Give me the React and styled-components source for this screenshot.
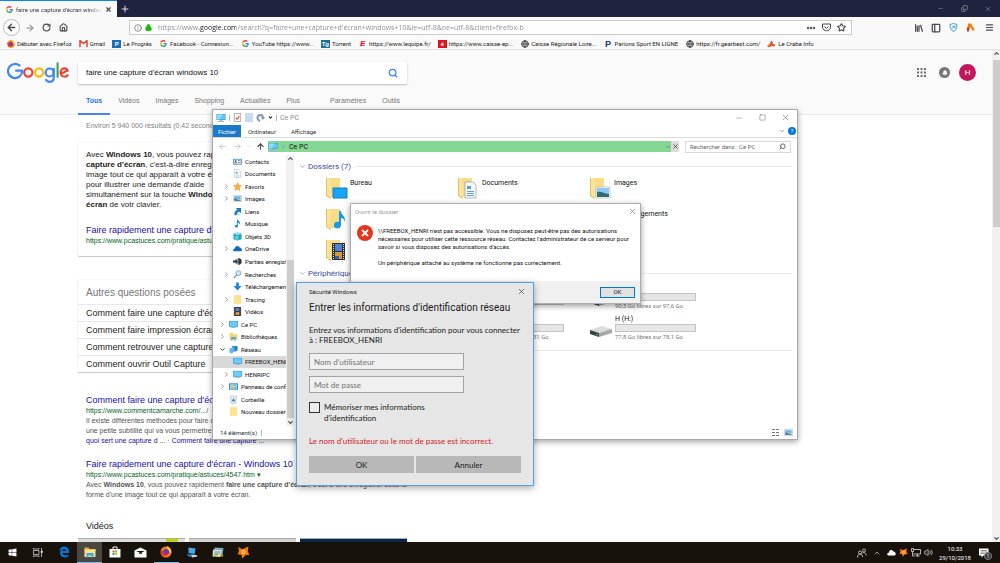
import React from 'react';
import styled, { createGlobalStyle, css } from 'styled-components';
import {
  ArrowLeft,
  ArrowRight,
  ArrowUp,
  Bell,
  ChevronDown,
  ChevronRight,
  ChevronUp,
  Copy,
  Ellipsis,
  Globe,
  House,
  Info,
  Library,
  Lock,
  Menu,
  Minus,
  PanelLeft,
  Plus,
  RotateCw,
  Search,
  Square,
  Star,
  Volume2,
  X,
} from 'lucide-react';
import { FaWindows } from 'react-icons/fa';

const arial = `'Liberation Sans', Arial, sans-serif`;
const ui = `Roboto, 'Noto Sans', sans-serif`;
const humanist = `Lato, 'Noto Sans', sans-serif`;

const GlobalStyle = createGlobalStyle`
  *, *::before, *::after { box-sizing: border-box; }
  body { margin: 0; overflow: hidden; background: #fff; font-family: ${ui}; }
  button, input { font: inherit; color: inherit; margin: 0; padding: 0; border: 0; background: none; border-radius: 0; }
  a { color: inherit; text-decoration: none; }
  h1, h2, h3, p, ul { margin: 0; padding: 0; font-weight: 400; list-style: none; }
  svg { display: block; flex: none; }
`;

// Desktop

const Desktop = styled.div`
  position: relative;
  display: flex;
  flex-direction: column;
  height: 100vh;
  overflow: hidden;
`;

const IconButton = styled.button`
  display: flex;
  align-items: center;
  justify-content: center;
  width: ${p => p.$w || 12}px;
  height: 12px;
  flex: none;
  color: ${p => p.$color || '#4a4a4f'};
`;

const Spacer = styled.div`
  flex: 1;
`;

// Browser chrome

const TabBar = styled.header`
  display: flex;
  height: 17px;
  flex: none;
  background: #202340;
`;

const Tab = styled.div`
  display: flex;
  align-items: center;
  gap: 3px;
  width: 117px;
  padding: 0 5px 0 6px;
  border-top: 1px solid #0a84ff;
  background: #f9f9fa;
  font-size: 6px;
  color: #38383d;
`;

const TabTitle = styled.span`
  flex: 1;
  overflow: hidden;
  white-space: nowrap;
  mask-image: linear-gradient(90deg, #000 85%, transparent);
`;

const TabBarButtons = styled.div`
  display: flex;
  align-items: center;
  gap: 12px;
  padding: 0 6px 0 2px;
`;

const NavBar = styled.nav`
  display: flex;
  align-items: center;
  gap: 5px;
  height: 21px;
  flex: none;
  padding: 0 3px;
  background: #f9f9fa;
`;

const BackButton = styled(IconButton)`
  width: 17px;
  height: 17px;
  border: 1px solid #b9b9bb;
  border-radius: 50%;
  background: #fdfdfd;
`;

const UrlBox = styled.div`
  display: flex;
  align-items: center;
  gap: 3px;
  flex: 1;
  height: 15px;
  margin: 0 56px 0 55px;
  padding: 0 4px;
  border: 1px solid #ccc;
  background: #fff;
  color: #5a5a5e;
`;

const UrlInput = styled.input`
  flex: 1;
  min-width: 0;
  margin-left: 3px;
  outline: none;
  font: 7px 'Open Sans', 'Noto Sans', sans-serif;
  color: transparent;
  background: linear-gradient(90deg, #8a8a8e 41px, #15141a 41px 78px, #8a8a8e 78px);
  background-clip: text;
`;

const Bookmarks = styled.ul`
  display: flex;
  align-items: center;
  gap: 7px;
  height: 12px;
  flex: none;
  padding: 0 6px;
  border-bottom: 1px solid #e1e1e2;
  background: #f9f9fa;
  font-size: 6px;
  color: #1c1c20;
  white-space: nowrap;
`;

const Bookmark = styled.a`
  display: flex;
  align-items: center;
  gap: 2px;
`;

const Favicon = styled.span`
  display: flex;
  align-items: center;
  justify-content: center;
  width: 9px;
  height: 8px;
  background: ${p => p.$bg || 'transparent'};
  color: ${p => p.$color || '#fff'};
  font: ${p => (p.$italic ? 'italic' : 'normal')} 700 ${p => p.$size || 6}px/8px ${arial};
`;

// Results page

const Page = styled.main`
  display: flex;
  flex: 1;
  min-height: 0;
  overflow: hidden;
  font-family: ${arial};
`;

const PageBody = styled.div`
  flex: 1;
  min-width: 0;
  overflow: hidden;
`;

const PageHeader = styled.div`
  height: 65px;
  padding-top: 11px;
  border-bottom: 1px solid #ebebeb;
  background: #fafafa;
`;

const SearchRow = styled.div`
  display: flex;
  align-items: center;
  height: 23px;
  padding: 0 16px 0 7px;
`;

const Logo = styled.a`
  width: 71px;
`;

const SearchBox = styled.form`
  display: flex;
  align-items: center;
  width: 329px;
  height: 22px;
  padding: 0 9px 0 8px;
  border-radius: 1px;
  background: #fff;
  box-shadow: 0 1px 2px rgba(0, 0, 0, 0.25);
`;

const SearchInput = styled.input`
  flex: 1;
  min-width: 0;
  outline: none;
  font-size: 8px;
  color: #111;
`;

const HeaderTools = styled.div`
  display: flex;
  align-items: center;
  gap: 13px;
`;

const BellBadge = styled.button`
  display: flex;
  align-items: center;
  justify-content: center;
  width: 11px;
  height: 11px;
  border-radius: 50%;
  background: #757575;
  color: #fff;
`;

const Avatar = styled.button`
  width: 17px;
  height: 17px;
  margin-left: -4px;
  border-radius: 50%;
  background: #c2185b;
  color: #fff;
  font: 8px ${ui};
`;

const SearchTabs = styled.nav`
  display: flex;
  height: 31px;
  padding-left: 78px;
`;

const SearchTab = styled.a`
  display: flex;
  align-items: flex-start;
  padding: 13px 8px 0;
  margin-right: ${p => (p.$gap ? 14 : 0)}px;
  font-size: 7px;
  line-height: 8px;
  color: #777;
  ${p =>
    p.$active &&
    css`
      font-weight: 700;
      color: #1a73e8;
      border-bottom: 2px solid #4285f4;
    `}
`;

const Results = styled.div`
  display: flex;
  flex-direction: column;
  width: 329px;
  margin-left: 78px;
`;

const Stats = styled.p`
  padding: 6px 8px 0;
  font-size: 7px;
  line-height: 10px;
  color: #808080;
`;

const Card = styled.section`
  margin-top: ${p => p.$top}px;
  border-radius: 1px;
  background: #fff;
  box-shadow: 0 0 1px rgba(0, 0, 0, 0.3), 0 1px 1px rgba(0, 0, 0, 0.2);
`;

const Snippet = styled(Card)`
  height: 114px;
  padding: 8px;
`;

const SnippetText = styled.p`
  margin-bottom: 14px;
  font-size: 8px;
  line-height: 10px;
  color: #222;
  white-space: nowrap;
`;

const ResultTitle = styled.a`
  display: block;
  font-size: 9px;
  line-height: 12px;
  color: #1a0dab;
  white-space: nowrap;
`;

const Cite = styled.span`
  display: block;
  font-size: 7px;
  line-height: 10px;
  color: #006621;
`;

const CardTitle = styled.h2`
  padding: 2px 8px 0;
  font-size: 10px;
  line-height: 22px;
  color: #777;
`;

const Question = styled.button`
  display: block;
  width: 100%;
  height: 17px;
  padding: 0 8px;
  border-top: 1px solid #e8e8e8;
  font-size: 9px;
  line-height: 16px;
  text-align: left;
  color: #222;
`;

const Result = styled.article`
  margin-top: ${p => p.$top}px;
  padding: 0 8px;
  font-size: 7px;
  line-height: 10px;
  color: #545454;
  white-space: nowrap;

  p a {
    color: #1a0dab;
  }
`;

const VideosTitle = styled.h2`
  padding: 20px 8px 6px;
  font-size: 9px;
  line-height: 12px;
  color: #222;
`;

const Videos = styled.div`
  display: flex;
  gap: 4px;
`;

const Thumb = styled.a`
  flex: 1;
  height: 20px;
  border-top: 1px solid #aaa;
  background: ${p => p.$bg};
`;

const ScrollBar = styled.div`
  display: flex;
  flex-direction: column;
  align-items: center;
  width: 8px;
  flex: none;
  background: #f0f0f0;
  color: #505050;
`;

const ScrollThumb = styled.div`
  width: 7px;
  height: ${p => p.$h}px;
  margin: ${p => p.$mt || 0}px 0 auto;
  background: #cdcdcd;
`;

// Windows floating over the desktop

const Window = styled.section`
  position: absolute;
  left: ${p => p.$x}px;
  top: ${p => p.$y}px;
  width: ${p => p.$w}px;
  display: flex;
  flex-direction: column;
`;

const ExplorerWindow = styled(Window)`
  height: 331px;
  border: 1px solid #a8a8a8;
  background: #fff;
  box-shadow: 0 2px 6px rgba(0, 0, 0, 0.35);
  font-size: 7px;
  color: #111;
`;

const TitleRow = styled.div`
  display: flex;
  align-items: center;
  gap: 3px;
  height: 15px;
  padding: 0 2px 0 3px;
  color: #8c8c8c;
`;

const Divider = styled.span`
  width: 1px;
  height: 6px;
  background: #b5b5b5;
`;

const Ribbon = styled.div`
  display: flex;
  align-items: center;
  height: 13px;
  padding-right: 1px;
  border-bottom: 1px solid #dadbdc;
`;

const RibbonTab = styled.button`
  height: 12px;
  padding: 0 ${p => (p.$active ? 5 : 7)}px;
  margin-right: ${p => (p.$active ? 0 : 1)}px;
  font-size: 6px;
  color: ${p => (p.$active ? '#fff' : '#333')};
  background: ${p => (p.$active ? '#1979ca' : 'transparent')};
`;

const HelpBadge = styled.button`
  width: 8px;
  height: 8px;
  border-radius: 50%;
  background: #0078d7;
  color: #fff;
  font-size: 6px;
  line-height: 8px;
`;

const AddressRow = styled.div`
  display: flex;
  align-items: center;
  height: 17px;
  padding: 0 6px 0 2px;
`;

const Address = styled.div`
  display: flex;
  align-items: center;
  gap: 3px;
  flex: 1;
  height: 11px;
  padding-left: 0;
  margin-left: 2px;
  background: #84d894;
`;

const StopButton = styled(IconButton)`
  width: 8px;
  height: 11px;
  background: #dcdcdc;
`;

const FindBox = styled.label`
  display: flex;
  align-items: center;
  width: 106px;
  height: 12px;
  margin-left: 6px;
  padding: 0 4px;
  border: 1px solid #d9d9d9;
  font-size: 6px;

  input {
    flex: 1;
    min-width: 0;
  }
  input::placeholder {
    color: #666;
    opacity: 1;
  }
`;

const FindIcon = styled(Search)`
  transform: scaleX(-1);
`;

const Panes = styled.div`
  display: flex;
  flex: 1;
  min-height: 0;
`;

const Tree = styled.ul`
  display: flex;
  flex-direction: column;
  width: 73px;
  height: 263px;
  font-size: 6px;
`;

const TreeItem = styled.li`
  display: flex;
  align-items: center;
  flex: 1;
  gap: 3px;
  padding-left: ${p => (p.$depth ? 10 : 6)}px;
  overflow: hidden;
  white-space: nowrap;
  background: ${p => (p.$selected ? '#d9d9d9' : 'transparent')};
`;

const Twisty = styled.span`
  width: 7px;
  flex: none;
  color: #888;
`;

const TreeScroll = styled(ScrollBar)`
  height: 271px;
`;

const Files = styled.div`
  flex: 1;
  padding: 6px 4px 0 5px;
`;

const GroupTitle = styled.h3`
  display: flex;
  align-items: center;
  gap: 2px;
  height: 10px;
  font-size: 8px;
  color: #3b4a9c;

  &::after {
    content: '';
    flex: 1;
    height: 1px;
    margin-left: 2px;
    background: #ececec;
  }
`;

const FolderGrid = styled.div`
  display: grid;
  grid-template-columns: repeat(3, 132px);
  grid-auto-rows: 31px;
  padding: 4px 0 0 27px;
`;

const FolderItem = styled.div`
  display: flex;
  gap: 2px;
  padding-top: 2px;

  span {
    padding-top: 2px;
  }
`;

const DriveGrid = styled.div`
  display: grid;
  grid-template-columns: repeat(3, 132px);
  grid-auto-rows: 31px;
  padding: 3px 0 7px 27px;
  border-bottom: 1px solid #ececec;
  color: #777;
`;

const DriveItem = styled.div`
  display: flex;
  align-items: center;
  gap: 3px;

  svg {
    margin-top: 6px;
  }
`;

const DriveInfo = styled.div`
  display: flex;
  flex-direction: column;
  width: 81px;
  font-size: 6px;
  line-height: 9px;
  white-space: nowrap;

  strong {
    font-size: 7px;
    font-weight: 400;
    color: #111;
  }
`;

const DriveBar = styled.div`
  height: 8px;
  border: 1px solid #c4c4c4;
  background: #e6e6e6;
`;

const StatusBar = styled.footer`
  display: flex;
  align-items: center;
  gap: 4px;
  height: 13px;
  padding: 0 4px 0 7px;
  font-size: 6px;
  color: #234;
`;

const ErrorWindow = styled(Window)`
  border: 1px solid #adadad;
  background: #fff;
  box-shadow: 0 2px 6px rgba(0, 0, 0, 0.4);
  font-size: 6px;
  line-height: 8px;
  color: #111;
`;

const ErrorTitle = styled.div`
  display: flex;
  align-items: center;
  justify-content: space-between;
  height: 15px;
  padding: 0 1px 0 4px;
  color: #999;
`;

const ErrorBody = styled.div`
  display: flex;
  gap: 5px;
  height: 62px;
  padding: 5px 6px 0;

  p {
    padding-top: 3px;
    white-space: nowrap;
  }
  p + p {
    padding-top: 8px;
  }
`;

const ErrorFooter = styled.div`
  display: flex;
  align-items: center;
  justify-content: flex-end;
  height: 22px;
  padding-right: 5px;
  background: #f0f0f0;
`;

const OkButton = styled.button`
  width: 35px;
  height: 11px;
  border: 1px solid #0078d7;
  background: #e1e1e1;
`;

const LoginWindow = styled(Window)`
  height: 204px;
  border: 1px solid #5ba0dc;
  background: #e6e6e6;
  box-shadow: 0 2px 7px rgba(0, 0, 0, 0.35);
  padding: 0 12px;
  font-family: ${humanist};
  font-size: 8px;
  color: #1a1a1a;
`;

const LoginTop = styled.div`
  display: flex;
  align-items: center;
  justify-content: space-between;
  height: 16px;
  margin-right: -6px;
  font: 6px ${ui};
`;

const LoginTitle = styled.h2`
  font: 10px/17px ${ui};
  white-space: nowrap;
`;

const LoginText = styled.p`
  margin: 9px 0 8px;
  line-height: 10px;
  white-space: nowrap;
`;

const LoginInput = styled.input`
  width: 155px;
  height: 17px;
  margin-bottom: 6px;
  padding: 0 4px;
  border: 1px solid #a3a3a3;
  background: #f0f0f0;

  &::placeholder {
    color: #707070;
    opacity: 1;
  }
`;

const Remember = styled.label`
  display: flex;
  gap: 4px;
  margin-top: 3px;
  line-height: 11px;

  input {
    appearance: none;
    width: 11px;
    height: 11px;
    border: 1px solid #333;
    background: #ececec;
  }
`;

const LoginError = styled.p`
  margin: 12px 0 9px;
  line-height: 11px;
  color: #d0201f;
  white-space: nowrap;
`;

const LoginActions = styled.div`
  display: flex;
  gap: 2px;

  button {
    flex: 1;
    height: 17px;
    background: #b8b8b8;
  }
`;

// Taskbar

const Taskbar = styled.footer`
  display: flex;
  align-items: stretch;
  height: 21px;
  flex: none;
  background: #17120c;
  color: #fff;
`;

const TaskApps = styled.div`
  display: grid;
  grid-template-columns: repeat(10, 1fr);
  width: 256px;
`;

const TaskButton = styled.button`
  display: flex;
  align-items: center;
  justify-content: center;
  border-bottom: 1px solid ${p => (p.$open ? '#76b9ed' : 'transparent')};
  background: ${p => (p.$active ? '#4a4641' : 'transparent')};
`;

const Tray = styled.div`
  display: flex;
  align-items: center;
  gap: 3px;
  margin-left: auto;
  padding-right: 11px;
`;

const Clock = styled.time`
  display: block;
  width: 34px;
  margin-left: 2px;
  font-size: 6px;
  line-height: 9px;
  text-align: center;
  white-space: nowrap;
`;

const NoticeBadge = styled.button`
  position: relative;
  display: flex;
  margin-left: 4px;

  span {
    position: absolute;
    left: 5px;
    top: 4px;
    width: 8px;
    height: 8px;
    border: 1px solid #888;
    border-radius: 50%;
    background: #333;
    font-size: 5px;
    line-height: 6px;
  }
`;

// Drawings

const GoogleG = () => (
  <svg width="7" height="7" viewBox="0 0 48 48">
    <path fill="#ea4335" d="M24 9.500c3.500 0 6.700 1.200 9.200 3.600l6.900-6.900C35.900 2.400 30.500 0 24 0 14.600 0 6.500 5.400 2.600 13.200l8 6.200C12.400 13.700 17.700 9.500 24 9.500z" />
    <path fill="#4285f4" d="M47 24.600c0-1.600-.2-3.100-.4-4.600H24v9h12.900c-.6 3-2.200 5.500-4.700 7.200l7.700 6C44.400 38 47 31.800 47 24.600z" />
    <path fill="#fbbc05" d="M10.500 28.600c-.5-1.500-.8-3-.8-4.600s.3-3.100.8-4.600l-8-6.200C1 16.500 0 20.100 0 24s.9 7.500 2.600 10.800z" />
    <path fill="#34a853" d="M24 48c6.500 0 11.900-2.100 15.900-5.800l-7.700-6c-2.200 1.500-4.900 2.300-8.200 2.300-6.300 0-11.600-4.200-13.500-9.900l-8 6.200C6.500 42.600 14.600 48 24 48z" />
  </svg>
);

const GoogleLogo = () => (
  <svg width="62" height="21" viewBox="0 0 272 92" role="img" aria-label="Google">
    <g fill="none" strokeWidth="9.500">
      <path stroke="#4285f4" d="M58 18A31 31 0 1 0 66.500 38H36" />
      <circle stroke="#ea4335" cx="93.500" cy="46" r="18" />
      <circle stroke="#fbbc05" cx="141" cy="46" r="18" />
      <circle stroke="#4285f4" cx="187" cy="46" r="17.500" />
      <path stroke="#4285f4" d="M205.500 26v40c0 14-7 21-18 21-9 0-15-5-17.500-12" />
      <path stroke="#34a853" d="M222 2v66" />
      <path stroke="#ea4335" d="M234 51l32-13c-3-7-8-10-14-10-9 0-17 7-17 18s8 18.500 18 18.500c7 0 12-3.500 15.500-9" />
    </g>
  </svg>
);

const Monitor = ({ size = 10 }) => (
  <svg width={size} height={size} viewBox="0 0 20 20">
    <path fill="#2a8dd4" d="M1 2h18v12H1z" />
    <path fill="#5cc7fb" d="M2 3h16v10H2z" />
    <path fill="#91dcff" d="M2 3h12L7 13H2z" />
    <path fill="#9fb4c4" d="M8 14h4v2H8zM4 16h12v2H4z" />
  </svg>
);

// Small icons of the navigation tree, on a 20 unit grid
const treeGlyphs = {
  contacts: (
    <>
      <path fill="#4f9fcf" d="M0 4h20v13H0z" />
      <path fill="#e8f4fb" d="M2 6h16v9H2z" />
      <circle cx="6" cy="9" r="2" fill="#345" />
      <path fill="#345" d="M3 14h6v-2H3zM11 8h6v1h-6zM11 11h6v1h-6z" />
    </>
  ),
  documents: (
    <>
      <path fill="#fff" stroke="#8ba3b5" d="M3 1h10l4 4v14H3z" />
      <path fill="#4a9bd0" d="M6 6h4v4H6zM6 12h8v1H6zM6 15h8v1H6zM11 7h3v1h-3z" />
    </>
  ),
  properties: (
    <>
      <path fill="#fff" stroke="#8c8c8c" strokeWidth="1.500" d="M3 1h14v18H3z" />
      <path fill="none" stroke="#e0552c" strokeWidth="2.500" d="M6 10l3 4 5-8" />
    </>
  ),
  favorites: <path fill="#fbb040" stroke="#e2902a" d="M10 1l3 6 6 1-4.500 4.500L15.500 19 10 16l-5.500 3 1-6.500L1 8l6-1z" />,
  images: (
    <>
      <path fill="#f2f7fa" stroke="#9ab" d="M1 3h18v14H1z" />
      <path fill="#68b6e8" d="M3 5h14v6H3z" />
      <path fill="#2b5d7e" d="M3 15v-5l6 2 8 1v2z" />
    </>
  ),
  links: (
    <>
      <path fill="#cfe3f2" d="M3 8h12v11H3z" />
      <path fill="#1b78c2" d="M6 2h12v12l-4-4c-4 1-6 4-6 8H3c0-6 2-10 7-12z" />
    </>
  ),
  music: <path fill="#1795dc" d="M9 1h2c1 4 6 5 5 12-1-3-3-4-5-4v7c0 4-7 4-7 0 0-3 3-4 5-3z" />,
  objects: (
    <>
      <path fill="#20a7c4" d="M1 4l9-3 9 3v12l-9 3-9-3z" />
      <path fill="#8be3ee" d="M1 4l9 3 9-3-9-3z" />
      <path fill="#64cfe0" d="M4 9h8v8H4z" />
    </>
  ),
  onedrive: <path fill="#0f6cbd" d="M1 16c-2-4 1-6 3-6 0-5 7-8 10-3 2 0 4 2 4 3 3 1 2 6 0 6z" />,
  saved: (
    <>
      <circle cx="12" cy="10" r="7" fill="#9aa8b2" />
      <path fill="#283640" d="M12 3a7 7 0 0 1 0 14zM0 8h6V5l5 5-5 5v-3H0z" />
    </>
  ),
  searches: (
    <>
      <circle cx="12" cy="7" r="5.500" fill="#cdeafa" stroke="#7f9db4" strokeWidth="2" />
      <path stroke="#7f9db4" strokeWidth="3" d="M8 11l-6 7" />
    </>
  ),
  downloads: <path fill="#1f86d8" d="M7 1h6v8h6l-9 10L1 9h6z" />,
  folder: (
    <>
      <path fill="#f3cf6b" d="M2 1h16v18H2z" />
      <path fill="#fde293" d="M5 3h13v16H2V1z" />
    </>
  ),
  videos: (
    <>
      <path fill="#2c2f36" d="M2 0h16v20H2z" />
      <path fill="#5c83c9" d="M6 2h8v7H6z" />
      <path fill="#d59a3d" d="M6 11h8v7H6z" />
      <path stroke="#ddd" strokeDasharray="2 2" d="M4 1v18M16 1v18" />
    </>
  ),
  pc: (
    <>
      <path fill="#2a8dd4" d="M0 2h20v13H0z" />
      <path fill="#6accfb" d="M1 3h18v11H1z" />
      <path fill="#9fb4c4" d="M8 15h4v1H8zM4 16h12v2H4z" />
    </>
  ),
  libraries: (
    <>
      <path fill="#f6d478" d="M1 2h8l2 3h8v13H1z" />
      <path fill="#4aa3dc" d="M5 11h10v8h-3v-4H8v4H5z" />
    </>
  ),
  network: (
    <>
      <path fill="#2a7fc0" d="M6 3l13-1v10l-7 3z" />
      <path fill="#5eb8ee" d="M1 8l11-3v10l-7 4-4-3z" />
    </>
  ),
  control: (
    <>
      <path fill="#2f86c5" d="M0 3h20v14H0z" />
      <path fill="#a6dbf7" d="M2 5h16v10H2z" />
      <circle cx="7" cy="10" r="3" fill="#f4b63c" />
      <path fill="#2a6" d="M12 7h4v2h-4zM12 11h4v2h-4z" />
    </>
  ),
  trash: (
    <>
      <path fill="#dfe7ec" stroke="#9fb0bb" d="M3 2h14l-2 17H5z" />
      <path fill="#2e86c8" d="M10 7l4 7H6z" />
    </>
  ),
};

const TreeIcon = ({ name }) => (
  <svg width="9" height="9" viewBox="0 0 20 20">
    {treeGlyphs[name]}
  </svg>
);

const RedoGlyph = () => (
  <svg width="9" height="9" viewBox="0 0 18 18">
    <path fill="none" stroke="#8499b8" strokeWidth="4" d="M8 16c-7-3-7-12 2-12 3 0 4 2 3 5" />
    <path fill="#8499b8" d="M9 8h9l-4 6z" />
  </svg>
);

const bigOverlays = {
  desktop: <path fill="#18a4f5" stroke="#0b7fca" d="M7 11h14v10H7z" />,
  documents: (
    <>
      <path fill="#f7fafc" stroke="#8a9aa6" strokeWidth=".7" d="M7 5h8l3 3v13H7z" />
      <path fill="#5d9fd0" d="M9 9h4v3H9zM9 14h7v1H9zM9 16h7v1H9zM9 18h7v1H9z" />
    </>
  ),
  images: (
    <>
      <path fill="#fff" stroke="#a9b6bf" strokeWidth=".7" d="M6 10h14v11H6z" />
      <path fill="#8cc9f2" d="M7 11h12v6H7z" />
      <path fill="#2f6a70" d="M7 15c4-1 7 2 12 2v3H7z" />
    </>
  ),
  music: <path fill="#159bea" d="M13 3h2c0 4 5 5 4 11-1-3-2-4-4-4v7c0 5-8 4-7 0 0-3 3-4 5-3z" />,
  videos: (
    <>
      <path fill="#2c2f36" d="M6 4h13v17H6z" />
      <path fill="#4f7fd6" d="M9 5h7v7H9z" />
      <path fill="#d79b35" d="M9 13h7v7H9z" />
      <path fill="#345fae" d="M9 17h4v3H9z" />
      <path stroke="#ddd" strokeDasharray="1 1" d="M7.500 5v15M17.500 5v15" />
    </>
  ),
};

const BigFolder = ({ kind }) => (
  <svg width="22" height="22" viewBox="0 0 22 22">
    <path fill="#f9dc86" d="M4 1h10v19H4z" />
    <path fill="#eac15c" d="M0 1h3l2 3v18l-5-3z" />
    <path fill="#fce49c" d="M1 1h3l1 3v17l-4-3z" />
    {bigOverlays[kind]}
  </svg>
);

const Drive = () => (
  <svg width="22" height="12" viewBox="0 0 22 12">
    <path fill="#d9dadb" d="M0 5l12-4 10 3-13 4z" />
    <path fill="#3b3e40" d="M0 5l9 3v4L0 9z" />
    <path fill="#a5a7a9" d="M9 8l13-4v4L9 12z" />
    <path fill="#3bd23b" d="M6 9l2 .6v1L6 10z" />
  </svg>
);

const EdgeIcon = () => (
  <svg width="12" height="12" viewBox="0 0 24 24">
    <path
      fill="#0078d7"
      d="M2 11C3 4 7 1 12.500 1 19 1 22 6 22 11v3H9c0 3 3 5 6 5 2 0 4-1 6-2v4c-2 1-4 2-7 2-6 0-10-4-10-9 0-4 2-6 5-8-4 1-6 3-7 5zM9 10h7c0-3-1-4-3-4S9 7 9 10z"
    />
  </svg>
);

const ExplorerIcon = () => (
  <svg width="12" height="11" viewBox="0 0 24 22">
    <path fill="#e8b339" d="M1 1h8l2 3h12v5H1z" />
    <path fill="#fce08a" d="M1 5h22v15H1z" />
    <path fill="#3fa9e4" d="M5 12h14v9h-4v-4H9v4H5z" />
  </svg>
);

const StoreIcon = () => (
  <svg width="12" height="12" viewBox="0 0 24 24">
    <path fill="none" stroke="#fff" strokeWidth="2" d="M8 7V2h8v5" />
    <path fill="#fff" d="M1 6h22v17H1z" />
    <path fill="#f25022" d="M7 9h4v4H7z" />
    <path fill="#7fba00" d="M12 9h4v4h-4z" />
    <path fill="#00a4ef" d="M7 14h4v4H7z" />
    <path fill="#ffb900" d="M12 14h4v4h-4z" />
  </svg>
);

const MailIcon = () => (
  <svg width="13" height="11" viewBox="0 0 26 22">
    <path fill="#fff" d="M1 7l12-6 12 6v14H1z" />
    <path fill="#17120c" d="M4 8h18l-7 3 2 4-4-2-3 1 1-3z" />
  </svg>
);

const FirefoxIcon = ({ size = 12 }) => (
  <svg width={size} height={size} viewBox="0 0 24 24">
    <circle cx="12" cy="12" r="11" fill="#ff7a1a" />
    <path fill="#ffd02e" d="M14 0c6 3 10 8 8 15-3-5-5-4-6-8-1-3-2-4-2-7z" />
    <circle cx="12" cy="12" r="6" fill="#5b3fb8" />
    <path fill="#e3293a" d="M2 6c1 5 4 4 6 6s3 5 8 3c-1 6-9 7-12 2-2-3-3-7-2-11z" />
  </svg>
);

const ComputersIcon = () => (
  <svg width="12" height="11" viewBox="0 0 24 22">
    <path fill="#49a8e8" d="M5 1l14 2-2 11-12-2z" />
    <path fill="#bfdaec" d="M9 15l12 1 2 3-11 2z" />
    <path fill="#2d76ad" d="M1 14l8 1 4 4-7 1z" />
  </svg>
);

const NotesIcon = () => (
  <svg width="12" height="11" viewBox="0 0 24 22">
    <path fill="#7aa9c6" d="M5 1l18 1-2 15-16-1z" />
    <path fill="#e8e0b8" d="M2 5l17 1-2 14L1 19z" />
    <path fill="#8fb9cc" d="M5 8h11v6H5z" />
    <path fill="#7fb874" d="M4 14h8v3H4z" />
    <path fill="#e0952f" d="M16 15h6v4h-6z" />
  </svg>
);

const AvastIcon = ({ size = 13 }) => (
  <svg width={size} height={size} viewBox="0 0 24 24">
    <path fill="#ff7800" d="M2 2l8 4 11-5-1 9 3 6-8 1-5 6-2-7-7-1 3-6z" />
    <circle cx="12" cy="11" r="3" fill="none" stroke="#fff" strokeWidth="1.500" />
  </svg>
);

const TaskViewIcon = () => (
  <svg width="10" height="9" viewBox="0 0 20 18" fill="none" stroke="#ccc" strokeWidth="1.600">
    <path d="M1 5h11v8H1zM1 0v2h11V0M1 18v-2h11v2M17 0v18" />
    <path fill="#ccc" d="M16 6h3v3h-3z" />
  </svg>
);

const PeopleIcon = () => (
  <svg width="10" height="10" viewBox="0 0 20 20" fill="none" stroke="#ddd" strokeWidth="1.600">
    <circle cx="6" cy="9" r="3" />
    <circle cx="14" cy="5" r="3" />
    <path d="M1 19c0-9 10-9 10-1M10 11c3-4 8-2 8 4" />
  </svg>
);

const TrayNetwork = () => (
  <svg width="10" height="9" viewBox="0 0 20 18" fill="none" stroke="#ddd" strokeWidth="1.600">
    <path d="M5 3h14v9H5M9 16h8M13 12v4M1 1h4v6H1zM3 7v9h4" />
  </svg>
);

const NoticeIcon = () => (
  <svg width="10" height="10" viewBox="0 0 20 20">
    <path fill="#fff" d="M0 1h19v14H9l-4 4v-4H0z" />
    <path stroke="#222" d="M3 5h13M3 8h13M3 11h8" />
  </svg>
);

const Pocket = () => (
  <svg width="9" height="9" viewBox="0 0 18 18" fill="none" stroke="#4a4a4f" strokeWidth="2">
    <path d="M1 2h16v6c0 10-16 10-16 0zM5 7l4 4 4-4" />
  </svg>
);

const ShieldGlyph = () => (
  <svg width="9" height="9" viewBox="0 0 18 18" fill="none" stroke="#2f9dbf" strokeWidth="1.800">
    <path d="M9 1l7 2c0 7-1 11-7 14C3 14 2 10 2 3zM6 11l6-6M7 7h5v4" />
  </svg>
);

const RunnerGlyph = () => (
  <svg width="9" height="9" viewBox="0 0 18 18">
    <path fill="#ff7a00" d="M4 1h6l8 14h-5L8 7v5H3z" />
    <path fill="#e03030" d="M2 9h4v8H2z" />
  </svg>
);

const GmailGlyph = () => (
  <svg width="9" height="7" viewBox="0 0 18 14">
    <path fill="#f4f4f4" d="M0 0h18v14H0z" />
    <path fill="none" stroke="#dd4b39" strokeWidth="3" d="M2 14V1l7 6 7-6v13" />
  </svg>
);

const CrabGlyph = () => (
  <svg width="9" height="8" viewBox="0 0 18 16">
    <path fill="#e2542c" d="M9 1l3 4-1 3 6 1-2 4-6-1-5 3-4-3 5-4z" />
    <circle cx="4" cy="10" r="2" fill="#f0a13a" />
  </svg>
);

const GridGlyph = () => (
  <svg width="9" height="9" viewBox="0 0 9 9" fill="#6b6b6b">
    {[0, 1, 2].map(r => [0, 1, 2].map(c => <rect key={`${r}${c}`} x={c * 3.5} y={r * 3.5} width="2" height="2" />))}
  </svg>
);

// Data

const bookmarks = [
  { label: 'Débuter avec Firefox', icon: <FirefoxIcon size={8} /> },
  { label: 'Gmail', icon: <GmailGlyph /> },
  { label: 'Le Progrès', text: 'P', bg: '#1c6fb5' },
  { label: 'Facebook - Connexion...', icon: <GoogleG /> },
  { label: 'YouTube https://www...', icon: <GoogleG /> },
  { label: 'Torrent', text: 'Tg', bg: '#1f6f95' },
  { label: 'https://www.lequipe.fr/', text: 'E', color: '#e0121b', size: 8, italic: true },
  { label: 'https://www.caisse-ep...', text: 'é', bg: '#e0121b' },
  { label: 'Caisse Régionale Loire...', icon: <Globe size={8} strokeWidth={3} color="#444" /> },
  { label: 'Parions Sport EN LIGNE', text: 'P', color: '#123a7c', size: 9 },
  { label: 'https://fr.gearbest.com/', icon: <Globe size={8} strokeWidth={3} color="#444" /> },
  { label: 'Le Crabe Info', icon: <CrabGlyph /> },
];

const searchTabs = ['Vidéos', 'Images', 'Shopping', 'Actualités', 'Plus', 'Paramètres', 'Outils'];

const questions = [
  "Comment faire une capture d'écran",
  'Comment faire impression écran',
  'Comment retrouver une capture',
  'Comment ouvrir Outil Capture',
];

const tree = [
  { label: 'Contacts', icon: 'contacts', depth: 1 },
  { label: 'Documents', icon: 'documents', depth: 1 },
  { label: 'Favoris', icon: 'favorites', depth: 1, arrow: true },
  { label: 'Images', icon: 'images', depth: 1, arrow: true },
  { label: 'Liens', icon: 'links', depth: 1 },
  { label: 'Musique', icon: 'music', depth: 1 },
  { label: 'Objets 3D', icon: 'objects', depth: 1 },
  { label: 'OneDrive', icon: 'onedrive', depth: 1, arrow: true },
  { label: 'Parties enregistrées', icon: 'saved', depth: 1 },
  { label: 'Recherches', icon: 'searches', depth: 1, arrow: true },
  { label: 'Téléchargements', icon: 'downloads', depth: 1 },
  { label: 'Tracing', icon: 'folder', depth: 1, arrow: true },
  { label: 'Vidéos', icon: 'videos', depth: 1 },
  { label: 'Ce PC', icon: 'pc', depth: 0, arrow: true },
  { label: 'Bibliothèques', icon: 'libraries', depth: 0, arrow: true },
  { label: 'Réseau', icon: 'network', depth: 0, open: true },
  { label: 'FREEBOX_HENRI', icon: 'pc', depth: 1, selected: true },
  { label: 'HENRIPC', icon: 'pc', depth: 1, arrow: true },
  { label: 'Panneau de configuration', icon: 'control', depth: 0, arrow: true },
  { label: 'Corbeille', icon: 'trash', depth: 0 },
  { label: 'Nouveau dossier', icon: 'folder', depth: 0 },
];

const folders = [
  { label: 'Bureau', kind: 'desktop' },
  { label: 'Documents', kind: 'documents' },
  { label: 'Images', kind: 'images' },
  { label: 'Musique', kind: 'music' },
  { label: 'Objets 3D', kind: 'documents' },
  { label: 'Téléchargements', kind: 'documents' },
  { label: 'Vidéos', kind: 'videos' },
];

const drives = [
  { name: 'C (C:)', free: '' },
  { name: 'D (D:)', free: '' },
  { name: 'E (E:)', free: '90,5 Go libres sur 97,6 Go' },
  { name: 'F (F:)', free: '' },
  { name: 'G (G:)', free: '401 Go libres sur 431 Go' },
  { name: 'H (H:)', free: '77,8 Go libres sur 78,1 Go' },
];

const Browser = () => (
  <>
    <TabBar>
      <Tab>
        <GoogleG />
        <TabTitle>faire une capture d'écran windows 10</TabTitle>
        <IconButton $w={7} aria-label="Fermer l'onglet">
          <X size={7} strokeWidth={4} />
        </IconButton>
      </Tab>
      <TabBarButtons>
        <IconButton $color="#fff" aria-label="Nouvel onglet">
          <Plus size={10} />
        </IconButton>
      </TabBarButtons>
      <Spacer />
      <TabBarButtons>
        <IconButton $color="#7c7e92" aria-label="Réduire">
          <Minus size={7} />
        </IconButton>
        <IconButton $color="#a7a8b5" aria-label="Restaurer">
          <Copy size={7} transform="scale(1 -1)" />
        </IconButton>
        <IconButton $color="#7c7e92" aria-label="Fermer">
          <X size={8} />
        </IconButton>
      </TabBarButtons>
    </TabBar>
    <NavBar>
      <BackButton aria-label="Précédent">
        <ArrowLeft size={11} strokeWidth={3} />
      </BackButton>
      <IconButton $w={10} $color="#999" aria-label="Suivant">
        <ArrowRight size={10} strokeWidth={3} />
      </IconButton>
      <IconButton aria-label="Actualiser">
        <RotateCw size={9} strokeWidth={3} />
      </IconButton>
      <IconButton aria-label="Accueil">
        <House size={9} strokeWidth={3} />
      </IconButton>
      <UrlBox>
        <Info size={8} />
        <Lock size={7} fill="#12bc00" color="#12bc00" strokeWidth={3} />
        <UrlInput
          aria-label="Adresse"
          defaultValue="https://www.google.com/search?q=faire+une+capture+d'écran+windows+10&ie=utf-8&oe=utf-8&client=firefox-b"
        />
        <IconButton aria-label="Actions">
          <Ellipsis size={10} strokeWidth={4} />
        </IconButton>
        <IconButton aria-label="Pocket">
          <Pocket />
        </IconButton>
        <IconButton aria-label="Marquer cette page">
          <Star size={9} strokeWidth={3} />
        </IconButton>
      </UrlBox>
      <IconButton aria-label="Bibliothèque">
        <Library size={10} strokeWidth={3} />
      </IconButton>
      <IconButton aria-label="Panneaux">
        <PanelLeft size={10} strokeWidth={3} />
      </IconButton>
      <IconButton aria-label="Protection">
        <ShieldGlyph />
      </IconButton>
      <IconButton aria-label="Extension">
        <RunnerGlyph />
      </IconButton>
      <IconButton $w={16} aria-label="Menu">
        <Menu size={9} strokeWidth={3} />
      </IconButton>
    </NavBar>
    <Bookmarks>
      {bookmarks.map(b => (
        <li key={b.label}>
          <Bookmark href="#">
            <Favicon $bg={b.bg} $color={b.color} $size={b.size} $italic={b.italic}>
              {b.icon || b.text}
            </Favicon>
            {b.label}
          </Bookmark>
        </li>
      ))}
    </Bookmarks>
  </>
);

const ResultsPage = () => (
  <Page>
    <PageBody>
      <PageHeader>
        <SearchRow>
          <Logo href="#">
            <GoogleLogo />
          </Logo>
          <SearchBox>
            <SearchInput aria-label="Rechercher" defaultValue="faire une capture d'écran windows 10" />
            <IconButton type="button" $w={10} $color="#4285f4" aria-label="Lancer la recherche">
              <Search size={10} strokeWidth={3} />
            </IconButton>
          </SearchBox>
          <Spacer />
          <HeaderTools>
            <GridGlyph />
            <BellBadge aria-label="Notifications">
              <Bell size={6} fill="#fff" />
            </BellBadge>
            <Avatar>H</Avatar>
          </HeaderTools>
        </SearchRow>
        <SearchTabs>
          <SearchTab href="#" $active>
            Tous
          </SearchTab>
          {searchTabs.map(t => (
            <SearchTab key={t} href="#" $gap={t === 'Plus'}>
              {t}
            </SearchTab>
          ))}
        </SearchTabs>
      </PageHeader>
      <Results>
        <Stats>Environ 5 940 000 résultats (0,42 secondes)</Stats>
        <Snippet $top={11}>
          <SnippetText>
            Avec <b>Windows 10</b>, vous pouvez rapidement
            <br />
            <b>capture d'écran</b>, c'est-à-dire enregistrer
            <br />
            image tout ce qui apparaît à votre écran
            <br />
            pour illustrer une demande d'aide
            <br />
            simultanément sur la touche <b>Windows</b>
            <br />
            <b>écran</b> de votr clavier.
          </SnippetText>
          <ResultTitle href="#">Faire rapidement une capture d'écran</ResultTitle>
          <Cite>https://www.pcastuces.com/pratique/astuces</Cite>
        </Snippet>
        <Card $top={24}>
          <CardTitle>Autres questions posées</CardTitle>
          {questions.map(q => (
            <Question key={q}>{q}</Question>
          ))}
        </Card>
        <Result $top={22}>
          <ResultTitle href="#">Comment faire une capture d'écran</ResultTitle>
          <Cite>https://www.commentcamarche.com/.../</Cite>
          <p>
            Il existe différentes méthodes pour faire une
            <br />
            une petite subtilité qui va vous permettre de
            <br />
            <a href="#">quoi sert une capture d ...</a> · <a href="#">Comment faire une capture ...</a>
          </p>
        </Result>
        <Result $top={12}>
          <ResultTitle href="#">Faire rapidement une capture d'écran - Windows 10</ResultTitle>
          <Cite>https://www.pcastuces.com/pratique/astuces/4547.htm ▾</Cite>
          <p>
            Avec <b>Windows 10</b>, vous pouvez rapidement <b>faire une capture d'écran</b>, c'est-à-dire enregistrer
            sous la
            <br />
            forme d'une image tout ce qui apparaît à votre écran.
          </p>
        </Result>
        <VideosTitle>Vidéos</VideosTitle>
        <Videos>
          <Thumb href="#" aria-label="Vidéo 1" $bg="linear-gradient(90deg, #ddd 82%, #c0d400 82% 93%, #ddd 93%)" />
          <Thumb href="#" aria-label="Vidéo 2" $bg="#d2d2d2" />
          <Thumb href="#" aria-label="Vidéo 3" $bg="#06284a" />
        </Videos>
      </Results>
    </PageBody>
    <ScrollBar>
      <ChevronUp size={7} strokeWidth={4} />
      <ScrollThumb $h={167} $mt={3} />
      <ChevronDown size={7} strokeWidth={4} />
    </ScrollBar>
  </Page>
);

const Explorer = () => (
  <ExplorerWindow $x={212} $y={109} $w={586}>
    <TitleRow>
      <Monitor />
      <Divider />
      <TreeIcon name="properties" />
      <svg width="8" height="9" viewBox="0 0 8 9">
        <path fill="#c9d9ef" d="M0 0h8v9H0z" />
      </svg>
      <RedoGlyph />
      <ChevronDown size={5} strokeWidth={5} color="#222" />
      <Divider />
      Ce PC
      <Spacer />
      <IconButton $w={20} $color="#999" aria-label="Réduire">
        <Minus size={8} />
      </IconButton>
      <IconButton $w={20} $color="#777" aria-label="Agrandir">
        <Square size={7} />
      </IconButton>
      <IconButton $w={20} $color="#888" aria-label="Fermer">
        <X size={9} />
      </IconButton>
    </TitleRow>
    <Ribbon>
      <RibbonTab $active>Fichier</RibbonTab>
      <RibbonTab>Ordinateur</RibbonTab>
      <RibbonTab>Affichage</RibbonTab>
      <Spacer />
      <IconButton aria-label="Développer le ruban">
        <ChevronDown size={6} />
      </IconButton>
      <HelpBadge aria-label="Aide">?</HelpBadge>
    </Ribbon>
    <AddressRow>
      <IconButton $w={14} $color="#bbb" aria-label="Précédent">
        <ArrowLeft size={9} />
      </IconButton>
      <IconButton $w={16} $color="#bbb" aria-label="Suivant">
        <ArrowRight size={9} />
      </IconButton>
      <IconButton $w={9} $color="#bbb" aria-label="Historique">
        <ChevronDown size={5} />
      </IconButton>
      <IconButton aria-label="Dossier parent">
        <ArrowUp size={9} strokeWidth={3} />
      </IconButton>
      <Address>
        <Monitor />
        <ChevronRight size={5} color="#555" />
        Ce PC
        <Spacer />
        <ChevronDown size={6} strokeWidth={3} color="#4a7a54" />
      </Address>
      <StopButton aria-label="Arrêter">
        <X size={7} strokeWidth={3} />
      </StopButton>
      <FindBox>
        <input aria-label="Rechercher dans Ce PC" placeholder="Rechercher dans : Ce PC" />
        <FindIcon size={7} strokeWidth={3} color="#555" />
      </FindBox>
    </AddressRow>
    <Panes>
      <Tree>
        {tree.map((t, i) => (
          <TreeItem key={i} $depth={t.depth} $selected={t.selected}>
            <Twisty>
              {t.arrow && <ChevronRight size={7} strokeWidth={3} />}
              {t.open && <ChevronDown size={7} strokeWidth={3} color="#333" />}
            </Twisty>
            <TreeIcon name={t.icon} />
            {t.label}
          </TreeItem>
        ))}
      </Tree>
      <TreeScroll>
        <ChevronUp size={7} strokeWidth={4} />
        <ScrollThumb $h={158} $mt={98} />
        <ChevronDown size={7} strokeWidth={4} />
      </TreeScroll>
      <Files>
        <GroupTitle>
          <ChevronDown size={7} color="#777" />
          Dossiers (7)
        </GroupTitle>
        <FolderGrid>
          {folders.map(f => (
            <FolderItem key={f.label}>
              <BigFolder kind={f.kind} />
              <span>{f.label}</span>
            </FolderItem>
          ))}
        </FolderGrid>
        <GroupTitle>
          <ChevronDown size={7} color="#777" />
          Périphériques et lecteurs (6)
        </GroupTitle>
        <DriveGrid>
          {drives.map(d => (
            <DriveItem key={d.name}>
              <Drive />
              <DriveInfo>
                <strong>{d.name}</strong>
                <DriveBar />
                <span>{d.free}</span>
              </DriveInfo>
            </DriveItem>
          ))}
        </DriveGrid>
      </Files>
    </Panes>
    <StatusBar>
      14 élément(s)
      <Divider />
      <Spacer />
      <svg width="8" height="7" viewBox="0 0 8 7" stroke="#777" fill="none">
        <path strokeDasharray="3 1" d="M0 .5h8M0 3.500h8M0 6.500h8" />
      </svg>
      <TreeIcon name="images" />
    </StatusBar>
  </ExplorerWindow>
);

const ErrorDialog = () => (
  <ErrorWindow $x={350} $y={203} $w={291} role="alertdialog">
    <ErrorTitle>
      Ouvrir le dossier
      <IconButton $w={14} $color="#888" aria-label="Fermer">
        <X size={9} />
      </IconButton>
    </ErrorTitle>
    <ErrorBody>
      <svg width="16" height="17" viewBox="0 0 16 17">
        <circle cx="8" cy="9" r="8" fill="#e5341f" />
        <path stroke="#fff" strokeWidth="1.800" d="M5 6l6 6M11 6l-6 6" />
      </svg>
      <div>
        <p>
          \\FREEBOX_HENRI n'est pas accessible. Vous ne disposez peut-être pas des autorisations
          <br />
          nécessaires pour utiliser cette ressource réseau. Contactez l'administrateur de ce serveur pour
          <br />
          savoir si vous disposez des autorisations d'accès.
        </p>
        <p>Un périphérique attaché au système ne fonctionne pas correctement.</p>
      </div>
    </ErrorBody>
    <ErrorFooter>
      <OkButton>OK</OkButton>
    </ErrorFooter>
  </ErrorWindow>
);

const LoginDialog = () => (
  <LoginWindow $x={296} $y={282} $w={238} role="dialog">
    <LoginTop>
      Sécurité Windows
      <IconButton aria-label="Fermer">
        <X size={9} />
      </IconButton>
    </LoginTop>
    <LoginTitle>Entrer les informations d'identification réseau</LoginTitle>
    <LoginText>
      Entrez vos informations d'identification pour vous connecter
      <br />à : FREEBOX_HENRI
    </LoginText>
    <LoginInput aria-label="Nom d'utilisateur" placeholder="Nom d'utilisateur" />
    <LoginInput type="password" aria-label="Mot de passe" placeholder="Mot de passe" />
    <Remember>
      <input type="checkbox" />
      <span>
        Mémoriser mes informations
        <br />
        d'identification
      </span>
    </Remember>
    <LoginError>Le nom d'utilisateur ou le mot de passe est incorrect.</LoginError>
    <LoginActions>
      <button>OK</button>
      <button>Annuler</button>
    </LoginActions>
  </LoginWindow>
);

const SystemBar = () => (
  <Taskbar>
    <TaskApps>
      <TaskButton aria-label="Démarrer">
        <FaWindows size={9} />
      </TaskButton>
      <TaskButton aria-label="Affichage des tâches">
        <TaskViewIcon />
      </TaskButton>
      <TaskButton aria-label="Edge">
        <EdgeIcon />
      </TaskButton>
      <TaskButton $active $open aria-label="Explorateur">
        <ExplorerIcon />
      </TaskButton>
      <TaskButton aria-label="Store">
        <StoreIcon />
      </TaskButton>
      <TaskButton aria-label="Courrier">
        <MailIcon />
      </TaskButton>
      <TaskButton $open aria-label="Firefox">
        <FirefoxIcon />
      </TaskButton>
      <TaskButton aria-label="Ordinateurs">
        <ComputersIcon />
      </TaskButton>
      <TaskButton aria-label="Notes">
        <NotesIcon />
      </TaskButton>
      <TaskButton aria-label="Avast">
        <AvastIcon />
      </TaskButton>
    </TaskApps>
    <Tray>
      <PeopleIcon />
      <IconButton $color="#ddd" $w={14} aria-label="Icônes cachées">
        <ChevronUp size={8} />
      </IconButton>
      <svg width="9" height="7" viewBox="0 0 20 16">
        <path fill="#fff" d="M2 15c-4-4 0-7 2-6C4 2 12 0 14 6c5-1 7 6 4 9z" />
      </svg>
      <AvastIcon size={9} />
      <TrayNetwork />
      <Volume2 size={9} color="#ddd" />
      <Clock>
        10:33
        <br />
        29/10/2018
      </Clock>
      <NoticeBadge aria-label="Notifications">
        <NoticeIcon />
        <span>1</span>
      </NoticeBadge>
    </Tray>
  </Taskbar>
);

const App = () => (
  <Desktop>
    <GlobalStyle />
    <Browser />
    <ResultsPage />
    <SystemBar />
    <Explorer />
    <ErrorDialog />
    <LoginDialog />
  </Desktop>
);

export default App;
